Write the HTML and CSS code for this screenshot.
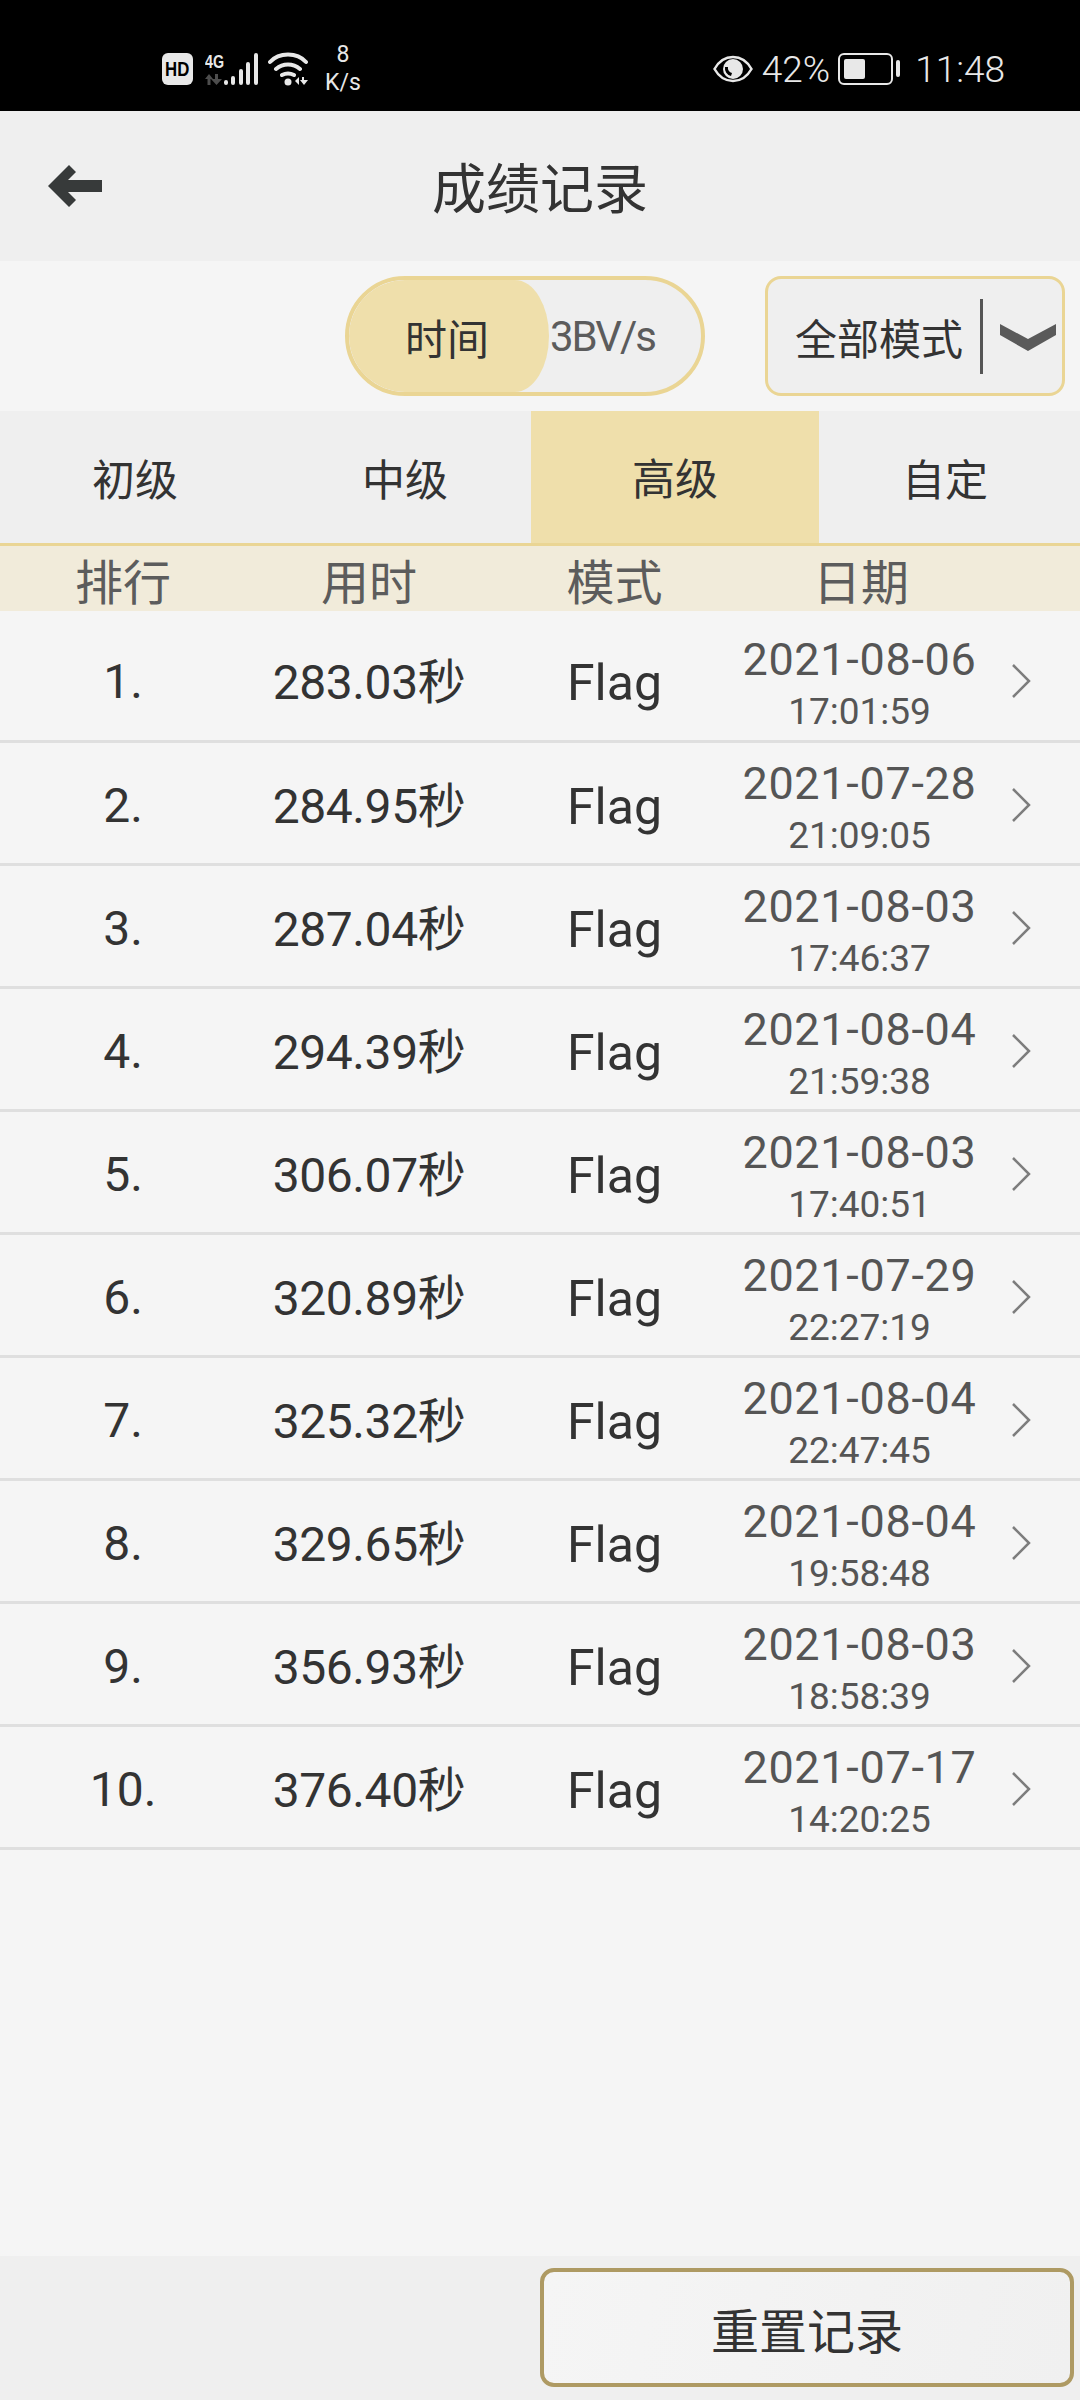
FILE: index.html
```html
<!doctype html>
<html lang="zh">
<head>
  <meta charset="utf-8">
  <title>成绩记录</title>
  <link rel="stylesheet" href="styles.css">
</head>
<body>
  <div class="status">
    <div class="status-left">
      <span class="hd"><span>HD</span></span>
      <div class="net">
        <span class="net-label">4G</span>
        <svg width="18" height="11" viewBox="0 0 18 11"><path d="M4 0 0 5h2.500v6h3V5H8zM10 0h3v5h4l-5.500 6L6 5h4z" fill="#4d4d4d"/></svg>
      </div>
      <svg class="signal" width="36" height="34" viewBox="0 0 36 34"><g fill="none" stroke="#e8e8e8" stroke-width="4" stroke-linecap="round"><path d="M3 30v1M10 26v5M18 19v12M25 12v19M33 3v28"/></g></svg>
      <svg class="wifi" width="41" height="34" viewBox="0 0 41 34"><g fill="none" stroke="#e8e8e8" stroke-width="4" stroke-linecap="round"><path d="M2 10C11 0 29 0 38 10M8 17c7-6 17-6 24 0M14 23c4-2 8-2 12 0"/></g><circle cx="20" cy="30" r="3.500" fill="#e8e8e8"/><path d="M31 25v8l-4-4zM34 25h2v3h4l-4 5-4-5h2z" fill="#e8e8e8"/></svg>
      <div class="speed"><span>8</span><span>K/s</span></div>
    </div>
    <div class="status-right">
      <svg class="eye" width="40" height="28" viewBox="0 0 40 28"><path d="M1.500 14C6 6 13 2 20 2s14 4 18.500 12C34 22 27 26 20 26S6 22 1.500 14z" fill="none" stroke="#e8e8e8" stroke-width="2.500"/><circle cx="20" cy="14" r="10" fill="#e8e8e8"/><path d="M12 12a8 8 0 0 0 6 9l1-3a5 5 0 0 1-4-6z" fill="#000"/></svg>
      <span class="pct">42%</span>
      <div class="battery"><span class="battery-fill"></span></div>
      <span class="battery-cap"></span>
      <span class="clock">11:48</span>
    </div>
  </div>

  <header class="title-bar">
    <svg class="back" width="54" height="42" viewBox="0 0 54 42"><path d="M21 0 28 7 20 15H54V27H20L28 35 21 42 0 21z" fill="#373a3a"/></svg>
    <h1>成绩记录</h1>
  </header>

  <div class="toolbar">
    <div class="toggle">
      <span class="toggle-on">时间</span>
      <span class="toggle-off">3BV/s</span>
    </div>
    <div class="mode-select">
      <span class="mode-label">全部模式</span>
      <span class="mode-sep"></span>
      <svg class="mode-arrow" width="56" height="29" viewBox="0 0 56 29"><path d="M0 2 28 17 56 2V13L28 29 0 13z" fill="#5a5a5a"/></svg>
    </div>
  </div>

  <nav class="tabs">
    <a>初级</a>
    <a>中级</a>
    <a class="active">高级</a>
    <a>自定</a>
  </nav>

  <div class="table-head">
    <span class="col-rank">排行</span>
    <span class="col-time">用时</span>
    <span class="col-mode">模式</span>
    <span class="col-date">日期</span>
  </div>

  <main class="rows">
    <div class="row"><span class="col-rank">1.</span><span class="col-time">283.03秒</span><span class="col-mode">Flag</span><div class="col-date"><b>2021-08-06</b><i>17:01:59</i></div><svg class="chev" width="20" height="36" viewBox="0 0 20 36"><path d="M2 2 18 18 2 34" fill="none" stroke="#7d7d7d" stroke-width="2.5"/></svg></div>
    <div class="row"><span class="col-rank">2.</span><span class="col-time">284.95秒</span><span class="col-mode">Flag</span><div class="col-date"><b>2021-07-28</b><i>21:09:05</i></div><svg class="chev" width="20" height="36" viewBox="0 0 20 36"><path d="M2 2 18 18 2 34" fill="none" stroke="#7d7d7d" stroke-width="2.5"/></svg></div>
    <div class="row"><span class="col-rank">3.</span><span class="col-time">287.04秒</span><span class="col-mode">Flag</span><div class="col-date"><b>2021-08-03</b><i>17:46:37</i></div><svg class="chev" width="20" height="36" viewBox="0 0 20 36"><path d="M2 2 18 18 2 34" fill="none" stroke="#7d7d7d" stroke-width="2.5"/></svg></div>
    <div class="row"><span class="col-rank">4.</span><span class="col-time">294.39秒</span><span class="col-mode">Flag</span><div class="col-date"><b>2021-08-04</b><i>21:59:38</i></div><svg class="chev" width="20" height="36" viewBox="0 0 20 36"><path d="M2 2 18 18 2 34" fill="none" stroke="#7d7d7d" stroke-width="2.5"/></svg></div>
    <div class="row"><span class="col-rank">5.</span><span class="col-time">306.07秒</span><span class="col-mode">Flag</span><div class="col-date"><b>2021-08-03</b><i>17:40:51</i></div><svg class="chev" width="20" height="36" viewBox="0 0 20 36"><path d="M2 2 18 18 2 34" fill="none" stroke="#7d7d7d" stroke-width="2.5"/></svg></div>
    <div class="row"><span class="col-rank">6.</span><span class="col-time">320.89秒</span><span class="col-mode">Flag</span><div class="col-date"><b>2021-07-29</b><i>22:27:19</i></div><svg class="chev" width="20" height="36" viewBox="0 0 20 36"><path d="M2 2 18 18 2 34" fill="none" stroke="#7d7d7d" stroke-width="2.5"/></svg></div>
    <div class="row"><span class="col-rank">7.</span><span class="col-time">325.32秒</span><span class="col-mode">Flag</span><div class="col-date"><b>2021-08-04</b><i>22:47:45</i></div><svg class="chev" width="20" height="36" viewBox="0 0 20 36"><path d="M2 2 18 18 2 34" fill="none" stroke="#7d7d7d" stroke-width="2.5"/></svg></div>
    <div class="row"><span class="col-rank">8.</span><span class="col-time">329.65秒</span><span class="col-mode">Flag</span><div class="col-date"><b>2021-08-04</b><i>19:58:48</i></div><svg class="chev" width="20" height="36" viewBox="0 0 20 36"><path d="M2 2 18 18 2 34" fill="none" stroke="#7d7d7d" stroke-width="2.5"/></svg></div>
    <div class="row"><span class="col-rank">9.</span><span class="col-time">356.93秒</span><span class="col-mode">Flag</span><div class="col-date"><b>2021-08-03</b><i>18:58:39</i></div><svg class="chev" width="20" height="36" viewBox="0 0 20 36"><path d="M2 2 18 18 2 34" fill="none" stroke="#7d7d7d" stroke-width="2.5"/></svg></div>
    <div class="row"><span class="col-rank">10.</span><span class="col-time">376.40秒</span><span class="col-mode">Flag</span><div class="col-date"><b>2021-07-17</b><i>14:20:25</i></div><svg class="chev" width="20" height="36" viewBox="0 0 20 36"><path d="M2 2 18 18 2 34" fill="none" stroke="#7d7d7d" stroke-width="2.5"/></svg></div>
  </main>

  <footer class="bottom-bar">
    <button class="reset">重置记录</button>
  </footer>
</body>
</html>
```

FILE: styles.css
```css
* {
  box-sizing: border-box;
}
html, body {
  margin: 0;
  padding: 0;
}
body {
  width: 1080px;
  height: 2400px;
  display: flex;
  flex-direction: column;
  overflow: hidden;
  background-color: #f5f5f5;
  color: #333;
  font-family: Roboto, "Noto Sans CJK SC", sans-serif;
}

/* status bar */
.status {
  height: 111px;
  flex: none;
  display: flex;
  align-items: center;
  justify-content: space-between;
  padding: 26px 75px 0 162px;
  background-color: #000;
  color: #e8e8e8;
}
.status-left, .status-right {
  display: flex;
  align-items: center;
}
.hd {
  width: 31px;
  height: 32px;
  display: flex;
  align-items: center;
  justify-content: center;
  border-radius: 6px;
  background-color: #e8e8e8;
  color: #000;
  font: bold 21px/32px "Liberation Sans", sans-serif;
}
.hd span {
  transform: scaleX(.8);
}
.net {
  display: flex;
  flex-direction: column;
  width: 19px;
  margin-left: 12px;
  gap: 3px;
}
.net-label {
  font: bold 19px/18px "Liberation Sans", sans-serif;
  transform: scaleX(.75);
  transform-origin: left;
}
.signal {
  margin-left: -1px;
}
.wifi {
  margin-left: 9px;
}
.speed {
  display: flex;
  flex-direction: column;
  align-items: center;
  width: 36px;
  margin-left: 16px;
  font-size: 23px;
  line-height: 28px;
}
.eye {
  margin-right: 9px;
}
.pct, .clock {
  margin-top: 2px;
  font-size: 37px;
  font-weight: 300;
}
.battery {
  width: 55px;
  height: 32px;
  margin-left: 8px;
  padding: 4px;
  border: 2.5px solid #e8e8e8;
  border-radius: 6px;
}
.battery-fill {
  display: block;
  width: 21px;
  height: 100%;
  border-radius: 2px;
  background-color: #e8e8e8;
}
.battery-cap {
  width: 4px;
  height: 17px;
  margin-left: 3px;
  border-radius: 2px;
  background-color: #e8e8e8;
}
.clock {
  margin-left: 15px;
}

/* title */
.title-bar {
  height: 150px;
  flex: none;
  position: relative;
  display: flex;
  align-items: center;
  justify-content: center;
  background-color: #efefef;
}
.title-bar h1 {
  margin: 0 0 2px;
  font-size: 54px;
  font-weight: 400;
  color: #333;
}
.back {
  position: absolute;
  left: 48px;
  top: 54px;
}

/* time / 3bv switch and mode dropdown */
.toolbar {
  height: 150px;
  flex: none;
  display: flex;
  align-items: center;
  justify-content: flex-end;
  gap: 60px;
  padding: 0 15px 0 0;
}
.toggle {
  width: 360px;
  height: 120px;
  display: flex;
  align-items: center;
  overflow: hidden;
  border: 4px solid #ead594;
  border-radius: 60px;
  background-color: #efefef;
  font-size: 42px;
}
.toggle-on {
  width: 200px;
  height: 100%;
  display: flex;
  align-items: center;
  justify-content: center;
  padding-right: 4px;
  border-radius: 56px 34px 34px 56px / 56px;
  background-color: #efdfab;
  color: #333;
}
.toggle-off {
  padding-left: 1px;
  letter-spacing: -2px;
  color: #5c5c5c;
}
.mode-select {
  width: 300px;
  height: 120px;
  display: flex;
  align-items: center;
  padding-left: 27px;
  border: 3px solid #ead594;
  border-radius: 16px;
  background-color: #efefef;
  font-size: 42px;
}
.mode-label {
  flex: none;
}
.mode-sep {
  flex: none;
  width: 3px;
  height: 75px;
  margin: 0 17px;
  background-color: #555;
}
.mode-arrow {
  flex: none;
}

/* level tabs */
.tabs {
  height: 135px;
  flex: none;
  display: grid;
  grid-template-columns: repeat(4, 270px);
  border-bottom: 3px solid #ead594;
  background-color: #efefef;
  font-size: 43px;
  color: #333;
}
.tabs a {
  display: flex;
  align-items: center;
  justify-content: center;
  margin-bottom: -3px;
  padding-bottom: 3px;
}
.tabs .active {
  margin: 0 -9px -3px;
  background-color: #efdfab;
  border-bottom: 3px solid #ead594;
}

/* table */
.table-head, .row {
  display: flex;
  align-items: center;
  flex: none;
}
.table-head {
  height: 65px;
  background-color: #f1ebda;
  color: #5c5c5c;
  font-size: 48px;
}
.table-head .col-date {
  padding-left: 3px;
}
.col-rank, .col-time, .col-mode {
  flex: none;
  text-align: center;
}
.col-rank {
  width: 246px;
}
.col-time {
  width: 246px;
}
.col-mode {
  width: 245px;
}
.col-date {
  width: 245px;
  text-align: center;
}
.rows {
  flex: 1;
}
.row {
  height: 123px;
  padding-top: 4px;
  border-bottom: 3px solid #dfdfdf;
  font-size: 48px;
  color: #333;
}
.row:first-child {
  height: 132px;
  padding-top: 11px;
}
.row .col-time {
  padding-bottom: 6px;
  letter-spacing: -.4px;
}
.row .col-mode {
  padding-top: 4px;
  font-size: 50px;
}
.row .col-date {
  display: flex;
  flex-direction: column;
  padding-top: 4px;
  color: #555;
}
.row b {
  font-size: 45px;
  font-weight: 400;
  line-height: 58px;
  letter-spacing: .7px;
}
.row i {
  font-size: 37px;
  font-style: normal;
  line-height: 46px;
}
.chev {
  margin-left: 29px;
}

/* footer */
.bottom-bar {
  height: 144px;
  flex: none;
  display: flex;
  justify-content: flex-end;
  padding: 12px 6px 13px 0;
  background-color: #efefef;
}
.reset {
  width: 534px;
  height: 119px;
  border: 4px solid #ae9a63;
  border-radius: 14px;
  background: linear-gradient(100deg, #f5f5f5, #f0f0f0);
  color: #333;
  font: 48px Roboto, "Noto Sans CJK SC", sans-serif;
}
```
